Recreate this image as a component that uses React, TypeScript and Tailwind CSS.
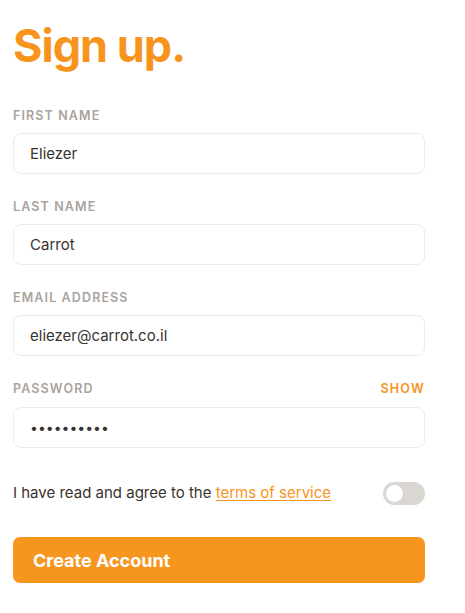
import React, { useState } from 'react';

const fields = [
  { label: 'First Name', value: 'Eliezer', type: 'text' },
  { label: 'Last Name', value: 'Carrot', type: 'text' },
  { label: 'Email Address', value: 'eliezer@carrot.co.il', type: 'email' },
];

export default function App() {
  const [agreed, setAgreed] = useState(false);

  return (
    <div className="min-h-screen bg-white font-['Inter',sans-serif] text-[#3a332d]">
      <div className="w-[412px] ml-[13px] pt-[18px]">
        <h1 className="text-[45px] leading-[56px] font-bold tracking-[-1px] text-[#f7941d]">Sign up.</h1>

        <form className="mt-[34px] flex flex-col gap-[25px]" onSubmit={(e) => e.preventDefault()}>
          {fields.map((f) => (
            <div key={f.label} className="flex flex-col gap-[9px]">
              <label className="text-[12.5px] leading-[16px] font-semibold uppercase tracking-[0.09em] text-[#aba39d]">
                {f.label}
              </label>
              <input
                type={f.type}
                defaultValue={f.value}
                className="h-[41px] rounded-[8px] border border-[#eeebe8] bg-white px-4 text-[15px] text-[#3a332d] outline-none"
              />
            </div>
          ))}

          <div className="flex flex-col gap-[10px]">
            <div className="flex items-center justify-between">
              <label className="text-[12.5px] leading-[16px] font-semibold uppercase tracking-[0.09em] text-[#aba39d]">
                Password
              </label>
              <span className="text-[12.5px] leading-[16px] font-semibold uppercase tracking-[0.1em] text-[#f7941d]">
                Show
              </span>
            </div>
            <input
              type="password"
              defaultValue="carrot1234"
              className="h-[41px] rounded-[8px] border border-[#eeebe8] bg-white px-4 text-[14px] text-[#3a332d] outline-none"
            />
          </div>

          {/* Terms toggle */}
          <div className="mt-[9px] flex items-center justify-between">
            <p className="text-[15px] text-[#3a332d]">
              I have read and agree to the{' '}
              <a href="#" className="text-[#f7941d] underline underline-offset-2">terms of service</a>
            </p>
            <button
              type="button"
              onClick={() => setAgreed(!agreed)}
              className={`flex h-[23px] w-[42px] items-center rounded-full px-[3px] ${agreed ? 'justify-end bg-[#f7941d]' : 'justify-start bg-[#dad7d3]'}`}
            >
              <span className="h-[17px] w-[17px] rounded-full bg-white" />
            </button>
          </div>

          <button
            type="submit"
            className="mt-[7px] h-[46px] rounded-[7px] bg-[#f7961f] px-5 text-left text-[18px] font-bold text-white"
          >
            Create Account
          </button>
        </form>
      </div>
    </div>
  );
}
